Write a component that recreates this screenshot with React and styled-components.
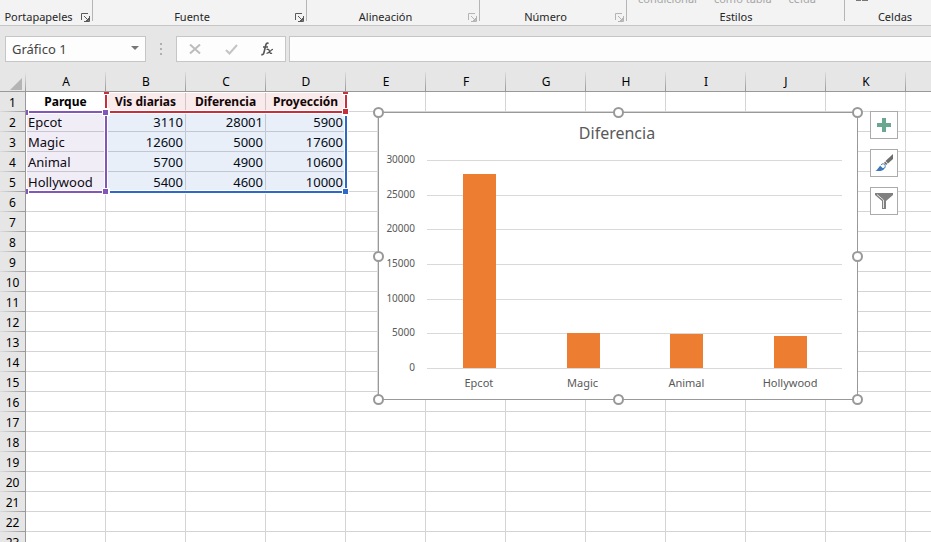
import React, { useState } from 'react';
import styled, { createGlobalStyle } from 'styled-components';

const GlobalStyle = createGlobalStyle`
  * {
    box-sizing: border-box;
  }

  body {
    margin: 0;
    background: #fff;
    font-family: 'Noto Sans', 'Open Sans', sans-serif;
    color: #262626;
  }

  button,
  input,
  select {
    font: inherit;
    color: inherit;
  }
`;

const Window = styled.div`
  display: flex;
  flex-direction: column;
  height: 100vh;
  overflow: hidden;
`;

const Ribbon = styled.header`
  display: flex;
  flex-shrink: 0;
  height: 26px;
  background: #f3f3f3;
  border-bottom: 1px solid #c6c6c6;
  overflow: hidden;
`;

const RibbonGroup = styled.section`
  display: flex;
  flex-direction: column;
  flex: 0 0 ${(props) => props.$width}px;
  justify-content: flex-end;
  background: linear-gradient(#b5b5b5, #b5b5b5) right top / 1px 21px no-repeat;
`;

const Commands = styled.div`
  display: flex;
  flex-shrink: 0;
  gap: 17px;
  height: 14px;
  padding-left: 11px;
  align-items: flex-end;
`;

const Command = styled.button`
  padding: 0;
  border: none;
  background: none;
  color: #a6a6a6;
  font-size: 11px;
  line-height: 14px;
`;

const GroupFooter = styled.div`
  display: flex;
  flex-shrink: 0;
  align-items: center;
  height: 16px;
  margin-top: 3px;
`;

const GroupTitle = styled.span`
  flex: 1;
  font-size: 11px;
  line-height: 16px;
  text-align: center;
`;

const Launcher = styled.button`
  display: flex;
  width: 16px;
  padding: 0 0 0 4px;
  border: none;
  background: none;
  color: ${(props) => (props.disabled ? '#b4b4b4' : '#5a5a5a')};
`;

const FormulaBar = styled.div`
  display: flex;
  flex-shrink: 0;
  align-items: center;
  height: 46px;
  padding-left: 5px;
  background: #e6e6e6;
`;

const NameBox = styled.div`
  display: flex;
  align-items: center;
  width: 141px;
  height: 26px;
  border: 1px solid #c6c6c6;
  background: #fdfdfd;
`;

const NameInput = styled.input`
  flex: 1;
  min-width: 0;
  padding: 0 6px;
  border: none;
  outline: none;
  background: none;
  color: #444;
  font-size: 13px;
`;

const PlainButton = styled.button`
  display: flex;
  align-items: center;
  justify-content: center;
  width: ${(props) => props.$width}px;
  height: 24px;
  padding: 0;
  border: none;
  background: none;
`;

const Grip = styled.div`
  display: grid;
  gap: 3px;
  width: 30px;
  justify-content: center;

  i {
    width: 2px;
    height: 2px;
    background: #b0b0b0;
  }
`;

const FormulaButtons = styled.div`
  display: flex;
  width: 110px;
  height: 26px;
  border: 1px solid #c6c6c6;
  background: #fdfdfd;
`;

const FormulaInput = styled.input`
  flex: 1;
  height: 26px;
  margin-left: 3px;
  padding: 0 6px;
  border: 1px solid #c6c6c6;
  border-right: none;
  outline: none;
  background: #fdfdfd;
  font-size: 13px;
`;

const Sheet = styled.main`
  position: relative;
  flex: 1;
  overflow: hidden;
`;

const Grid = styled.table`
  width: 986px;
  border-collapse: separate;
  border-spacing: 0;
  table-layout: fixed;
  color: #000;
  font-size: 13px;
  line-height: 18px;
`;

const Corner = styled.th`
  width: 26px;
  height: 20px;
  padding: 0;
  background: linear-gradient(#e6e6e6, #999) right / 1px 100% no-repeat, #e6e6e6;
  border-bottom: 1px solid #999;

  svg {
    display: block;
    margin: 4px 0 0 10px;
  }
`;

const ColumnHead = styled.th`
  width: 80px;
  height: 20px;
  padding: 0;
  background: linear-gradient(#dcdcdc, #999) right / 1px 100% no-repeat, #e6e6e6;
  border-bottom: 1px solid #999;
  font-size: 12px;
  font-weight: 400;
`;

const RowHead = styled.th`
  height: 20px;
  padding: 2px 0 0;
  background: linear-gradient(90deg, #dcdcdc, #999) bottom / 100% 1px no-repeat, #e6e6e6;
  border-right: 1px solid #999;
  font-size: 12px;
  font-weight: 400;
`;

const Cell = styled.td`
  height: 20px;
  padding: ${(props) => (props.$head ? '1px 2px 0' : '0 2px')};
  border-right: 1px solid #d4d4d4;
  border-bottom: 1px solid #d4d4d4;
  font-weight: ${(props) => (props.$head ? 700 : 400)};
  font-size: ${(props) => (props.$head ? 12 : 13)}px;
  text-align: ${(props) => props.$align};
  white-space: nowrap;
`;

/* everything that floats over the cells, origin at cell A1 */
const Layer = styled.div`
  position: absolute;
  inset: 20px 0 0 26px;
  overflow: hidden;
`;

const Range = styled.div`
  position: absolute;
  left: ${(props) => props.$left}px;
  top: ${(props) => props.$top}px;
  width: ${(props) => props.$width}px;
  height: ${(props) => props.$height}px;
  border: 2px solid ${(props) => props.$color};
  background: ${(props) => props.$fill};
  box-shadow: 0 0 0 1px #fff, inset 0 0 0 1px #fff;
`;

const RangeHandle = styled.i`
  position: absolute;
  ${(props) => props.$y}: -4px;
  ${(props) => props.$x}: -4px;
  width: 7px;
  height: 7px;
  border: 1px solid #fff;
  background: ${(props) => props.$color};
`;

const ChartFrame = styled.figure`
  position: absolute;
  left: 352px;
  top: 20px;
  width: 480px;
  height: 288px;
  margin: 0;
  border: 1px solid #999;
  background: #fff;
  box-shadow: -1px 0 0 #dcdcdc;

  > svg {
    display: block;
  }
`;

const ChartHandles = styled.div`
  position: absolute;
  inset: -1px 0 0 -1px;
`;

const ChartHandle = styled.i`
  position: absolute;
  left: ${(props) => props.$x};
  top: ${(props) => props.$y};
  width: 11px;
  height: 11px;
  margin: -5px;
  border: 2px solid #999;
  border-radius: 50%;
  background: #fff;
`;

const ChartTools = styled.div`
  position: absolute;
  left: 844px;
  top: 19px;
  display: grid;
  gap: 10px;
`;

const ToolButton = styled.button`
  display: flex;
  align-items: center;
  justify-content: center;
  width: 28px;
  height: 28px;
  padding: 0;
  border: 1px solid #ababab;
  background: #fff;
`;

const groups = [
    { title: 'Portapapeles', width: 93, launcher: true },
    { title: 'Fuente', width: 214, launcher: true },
    { title: 'Alineación', width: 173, launcher: true, disabled: true },
    { title: 'Número', width: 147, launcher: true, disabled: true },
    { title: 'Estilos', width: 218, commands: ['condicional', 'como tabla', 'celda'] },
    { title: 'Celdas', width: 100, icon: true },
];

const columns = ['A', 'B', 'C', 'D', 'E', 'F', 'G', 'H', 'I', 'J', 'K', ''];

const data = [
    ['Parque', 'Vis diarias', 'Diferencia', 'Proyección'],
    ['Epcot', 3110, 28001, 5900],
    ['Magic', 12600, 5000, 17600],
    ['Animal', 5700, 4900, 10600],
    ['Hollywood', 5400, 4600, 10000],
];

const rowCount = 23;

const ranges = [
    { color: '#2f69c8', fill: 'rgba(47, 105, 200, 0.11)', left: 79, top: 19, width: 242, height: 82 },
    { color: '#c4313c', fill: 'rgba(196, 49, 60, 0.1)', left: 79, top: -2, width: 242, height: 23 },
    { color: '#8257b8', fill: 'rgba(130, 87, 184, 0.11)', left: -2, top: 19, width: 83, height: 82 },
];

const LauncherIcon = () => (
    <svg width="9" height="9" viewBox="0 0 9 9" fill="none" stroke="currentColor">
        <path d="M.5 7V.5H7M3 3l4 4M8.5 3v5.5H3M7.5 5v2.5H5" />
    </svg>
);

const ColumnChart = ({ rows }) => {
    const left = 48;
    const width = 415;
    const base = 255;
    const scale = 208 / 30000;
    const step = width / rows.length;
    const ticks = [0, 5000, 10000, 15000, 20000, 25000, 30000];

    return (
        <svg width="478" height="286" viewBox="0 0 478 286" fill="#595959">
            <text x="238" y="26" fontSize="16" textAnchor="middle">Diferencia</text>
            {ticks.map((tick) => {
                const y = Math.round(base - tick * scale);
                return (
                    <g key={tick}>
                        <rect x={left} y={y} width={width} height="1" fill="#d9d9d9" />
                        <text x="36" y={y + 3} fontSize="10" textAnchor="end">{tick}</text>
                    </g>
                );
            })}
            {rows.map((row, i) => {
                const center = left + step * (i + 0.5);
                const top = Math.round(base - row[2] * scale);
                return (
                    <g key={row[0]}>
                        <rect x={Math.round(center - 16)} y={top} width="33" height={base - top} fill="#ed7d31" />
                        <text x={center} y="274" fontSize="11" textAnchor="middle">{row[0]}</text>
                    </g>
                );
            })}
        </svg>
    );
};

const App = () => {
    const [name, setName] = useState('Gráfico 1');
    const [formula, setFormula] = useState('');

    return (
        <Window>
            <GlobalStyle />
            <Ribbon>
                {groups.map((group) => (
                    <RibbonGroup key={group.title} $width={group.width}>
                        {group.commands && (
                            <Commands>
                                {group.commands.map((command) => (
                                    <Command key={command} disabled>{command}</Command>
                                ))}
                            </Commands>
                        )}
                        {group.icon && (
                            <Commands>
                                <svg width="13" height="14" viewBox="0 0 13 14" fill="#777">
                                    <path d="M0 5h5v4H0zM6 5h6v4H6z" />
                                </svg>
                            </Commands>
                        )}
                        <GroupFooter>
                            <GroupTitle>{group.title}</GroupTitle>
                            {group.launcher && (
                                <Launcher disabled={group.disabled} aria-label={`Opciones de ${group.title}`}>
                                    <LauncherIcon />
                                </Launcher>
                            )}
                        </GroupFooter>
                    </RibbonGroup>
                ))}
            </Ribbon>
            <FormulaBar>
                <NameBox>
                    <NameInput aria-label="Cuadro de nombres" value={name} onChange={(e) => setName(e.target.value)} />
                    <PlainButton $width={20} aria-label="Abrir lista de nombres">
                        <svg width="8" height="6" viewBox="0 0 8 6" fill="#777"><path d="M0 0h8L4 4z" /></svg>
                    </PlainButton>
                </NameBox>
                <Grip><i /><i /><i /></Grip>
                <FormulaButtons>
                    <PlainButton $width={36} aria-label="Cancelar">
                        <svg width="12" height="10" viewBox="0 0 12 10" fill="none" stroke="#bdbdbd" strokeWidth="2">
                            <path d="M1 .5l10 9M11 .5l-10 9" />
                        </svg>
                    </PlainButton>
                    <PlainButton $width={36} aria-label="Introducir">
                        <svg width="13" height="11" viewBox="0 0 13 11" fill="none" stroke="#c4c4c4" strokeWidth="2">
                            <path d="M1 6l3.500 3.500L12 1" />
                        </svg>
                    </PlainButton>
                    <PlainButton $width={36} aria-label="Insertar función">
                        <svg width="14" height="14" viewBox="0 0 14 14" fill="none" stroke="#555">
                            <path strokeWidth="1.600" d="M8.500 1.600C7.500.6 6.300 1 5.800 3L4 10.500c-.5 2-1.300 2.500-2.700 1.900M3 5h5" />
                            <path strokeWidth="1.300" d="M6.500 7.500c2-.8 2.500.2 3 2s1 2.500 2.500 1.500M13 7.300c-2-.3-3.200 4.200-6.500 4" />
                        </svg>
                    </PlainButton>
                </FormulaButtons>
                <FormulaInput aria-label="Barra de fórmulas" value={formula} onChange={(e) => setFormula(e.target.value)} />
            </FormulaBar>
            <Sheet>
                <Grid>
                    <thead>
                        <tr>
                            <Corner>
                                <svg width="12" height="12" viewBox="0 0 12 12" fill="#b4b4b4"><path d="M12 0v12H0z" /></svg>
                            </Corner>
                            {columns.map((column, i) => (
                                <ColumnHead key={i} scope="col">{column}</ColumnHead>
                            ))}
                        </tr>
                    </thead>
                    <tbody>
                        {Array.from({ length: rowCount }, (_, r) => (
                            <tr key={r}>
                                <RowHead scope="row">{r + 1}</RowHead>
                                {columns.map((column, c) => {
                                    const value = data[r]?.[c];
                                    let align = typeof value === 'number' ? 'right' : 'left';
                                    if (r === 0) align = 'center';
                                    return (
                                        <Cell key={c} $head={r === 0} $align={align}>{value}</Cell>
                                    );
                                })}
                            </tr>
                        ))}
                    </tbody>
                </Grid>
                <Layer>
                    {ranges.map((range) => (
                        <Range
                            key={range.color}
                            $color={range.color}
                            $fill={range.fill}
                            $left={range.left}
                            $top={range.top}
                            $width={range.width}
                            $height={range.height}
                        >
                            <RangeHandle $x="left" $y="top" $color={range.color} />
                            <RangeHandle $x="right" $y="top" $color={range.color} />
                            <RangeHandle $x="left" $y="bottom" $color={range.color} />
                            <RangeHandle $x="right" $y="bottom" $color={range.color} />
                        </Range>
                    ))}
                    <ChartFrame>
                        <ColumnChart rows={data.slice(1)} />
                        <ChartHandles>
                            {['0%', '50%', '100%'].map((x) =>
                                ['0%', '50%', '100%'].map((y) =>
                                    x === '50%' && y === '50%' ? null : <ChartHandle key={x + y} $x={x} $y={y} />
                                )
                            )}
                        </ChartHandles>
                    </ChartFrame>
                    <ChartTools>
                        <ToolButton aria-label="Elementos de gráfico">
                            <svg width="14" height="14" viewBox="0 0 14 14" fill="#6aa791">
                                <path d="M5 0h4v5h5v4H9v5H5V9H0V5h5z" />
                            </svg>
                        </ToolButton>
                        <ToolButton aria-label="Estilos de gráfico">
                            <svg width="18" height="18" viewBox="0 0 18 18">
                                <path fill="#6d6d6d" d="M18 0v5l-5 4.500L10.500 7z" />
                                <path fill="#6d6d6d" d="M10 7.500l2.500 2.500-1.500 1-2-2z" />
                                <path fill="#fff" stroke="#3e78b8" d="M6 11c1-1.500 2.500-1.500 3.500-.5s1 2.500 0 3.500" />
                                <path fill="#3e78b8" d="M0 17c2.500-.5 3-3.500 5.500-5.500 0 1.500 1.500 1 2 2.500 1 0 1.500-.5 2.500-.5C9 16.500 6 17.500 0 17z" />
                            </svg>
                        </ToolButton>
                        <ToolButton aria-label="Filtros de gráfico">
                            <svg width="18" height="18" viewBox="0 0 18 18" fill="#808080">
                                <path d="M0 1h18v2l-7 6v8H7V9L0 3z" />
                                <path fill="none" stroke="#fff" d="M2 2.500l6.500 5.500v8" strokeWidth=".8" />
                            </svg>
                        </ToolButton>
                    </ChartTools>
                </Layer>
            </Sheet>
        </Window>
    );
};

export default App;
